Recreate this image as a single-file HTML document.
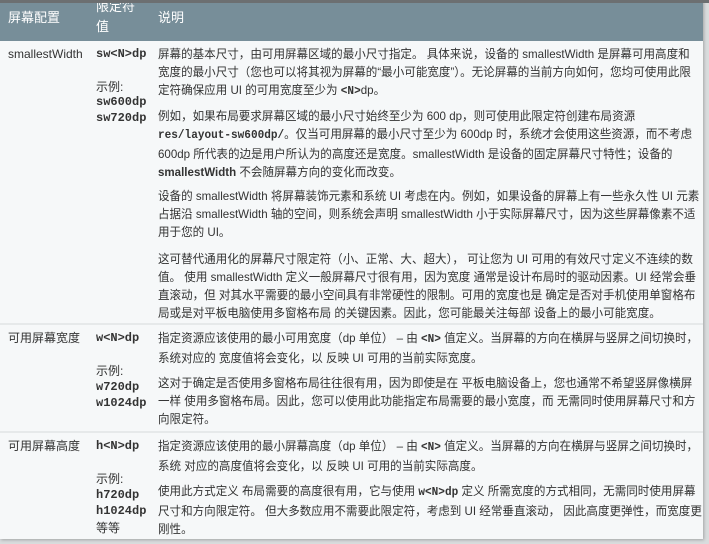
<!DOCTYPE html>
<html><head><meta charset="utf-8"><style>
html,body{margin:0;padding:0;width:709px;height:544px;overflow:hidden;background:#d9dcdd;}
body{font-family:"Liberation Sans","Noto Sans CJK SC",sans-serif;font-size:12px;color:#333;}
.tbl{position:absolute;left:0;top:0;width:703px;height:539px;background:#f6f8f9;box-shadow:1px 1px 3px rgba(0,0,0,.25);}
.top{position:absolute;left:0;top:0;width:709px;height:3px;background:#6c6f71;}
.hd{position:absolute;left:0;top:3px;width:703px;height:38px;background:#778e99;color:#fff;font-size:13px;}
.t{position:absolute;white-space:nowrap;line-height:18px;}
.d{transform:scaleX(0.962);transform-origin:0 0;}
.m{font-family:"Liberation Mono","DejaVu Sans Mono",monospace;font-weight:bold;color:#333;font-size:12px;}
.div{position:absolute;left:0;width:703px;height:2px;background:#e6e9ea;}
b.c{font-family:"Liberation Mono",monospace;font-size:11.5px;}
</style></head><body>
<div class="tbl"></div>
<div class="hd">
<div class="t" style="left:8px;top:6px">屏幕配置</div>
<div class="t" style="left:96px;top:-6px;line-height:20px">限定符<br>值</div>
<div class="t" style="left:158px;top:6px">说明</div>
</div>
<div class="top"></div>

<div class="t" style="left:8px;top:45px">smallestWidth</div>
<div class="t m" style="left:96px;top:45px">sw&lt;N&gt;dp</div>
<div class="t" style="left:96px;top:78px">示例:</div>
<div class="t m" style="left:96px;top:94px;line-height:16px">sw600dp<br>sw720dp</div>
<div class="t d" style="left:158px;top:45px">屏幕的基本尺寸，由可用屏幕区域的最小尺寸指定。 具体来说，设备的 smallestWidth 是屏幕可用高度和<br>宽度的最小尺寸（您也可以将其视为屏幕的“最小可能宽度”）。无论屏幕的当前方向如何，您均可使用此限<br>定符确保应用 UI 的可用宽度至少为 <b class="c">&lt;N&gt;</b>dp。</div>
<div class="t d" style="left:158px;top:107px">例如，如果布局要求屏幕区域的最小尺寸始终至少为 600 dp，则可使用此限定符创建布局资源<br><b class="c">res/layout-sw600dp/</b>。仅当可用屏幕的最小尺寸至少为 600dp 时，系统才会使用这些资源，而不考虑<br>600dp 所代表的边是用户所认为的高度还是宽度。smallestWidth 是设备的固定屏幕尺寸特性；设备的<br><b>smallestWidth</b> 不会随屏幕方向的变化而改变。</div>
<div class="t d" style="left:158px;top:187px">设备的 smallestWidth 将屏幕装饰元素和系统 UI 考虑在内。例如，如果设备的屏幕上有一些永久性 UI 元素<br>占据沿 smallestWidth 轴的空间，则系统会声明 smallestWidth 小于实际屏幕尺寸，因为这些屏幕像素不适<br>用于您的 UI。</div>
<div class="t d" style="left:158px;top:250px">这可替代通用化的屏幕尺寸限定符（小、正常、大、超大）， 可让您为 UI 可用的有效尺寸定义不连续的数<br>值。 使用 smallestWidth 定义一般屏幕尺寸很有用，因为宽度 通常是设计布局时的驱动因素。UI 经常会垂<br>直滚动，但 对其水平需要的最小空间具有非常硬性的限制。可用的宽度也是 确定是否对手机使用单窗格布<br>局或是对平板电脑使用多窗格布局 的关键因素。因此，您可能最关注每部 设备上的最小可能宽度。</div>
<div class="div" style="top:323px"></div>

<div class="t" style="left:8px;top:329px">可用屏幕宽度</div>
<div class="t m" style="left:96px;top:329px">w&lt;N&gt;dp</div>
<div class="t" style="left:96px;top:362px">示例:</div>
<div class="t m" style="left:96px;top:379px;line-height:16px">w720dp<br>w1024dp</div>
<div class="t d" style="left:158px;top:329px">指定资源应该使用的最小可用宽度（dp 单位） – 由 <b class="c">&lt;N&gt;</b> 值定义。当屏幕的方向在横屏与竖屏之间切换时，<br>系统对应的 宽度值将会变化，以 反映 UI 可用的当前实际宽度。</div>
<div class="t d" style="left:158px;top:374px">这对于确定是否使用多窗格布局往往很有用，因为即使是在 平板电脑设备上，您也通常不希望竖屏像横屏<br>一样 使用多窗格布局。因此，您可以使用此功能指定布局需要的最小宽度，而 无需同时使用屏幕尺寸和方<br>向限定符。</div>
<div class="div" style="top:431px"></div>

<div class="t" style="left:8px;top:437px">可用屏幕高度</div>
<div class="t m" style="left:96px;top:437px">h&lt;N&gt;dp</div>
<div class="t" style="left:96px;top:470px">示例:</div>
<div class="t m" style="left:96px;top:487px;line-height:16px">h720dp<br>h1024dp</div>
<div class="t" style="left:96px;top:519px">等等</div>
<div class="t d" style="left:158px;top:437px">指定资源应该使用的最小屏幕高度（dp 单位） – 由 <b class="c">&lt;N&gt;</b> 值定义。当屏幕的方向在横屏与竖屏之间切换时，<br>系统 对应的高度值将会变化，以 反映 UI 可用的当前实际高度。</div>
<div class="t d" style="left:158px;top:482px">使用此方式定义 布局需要的高度很有用，它与使用 <b class="c">w&lt;N&gt;dp</b> 定义 所需宽度的方式相同，无需同时使用屏幕<br>尺寸和方向限定符。 但大多数应用不需要此限定符，考虑到 UI 经常垂直滚动， 因此高度更弹性，而宽度更<br>刚性。</div>
</body></html>
